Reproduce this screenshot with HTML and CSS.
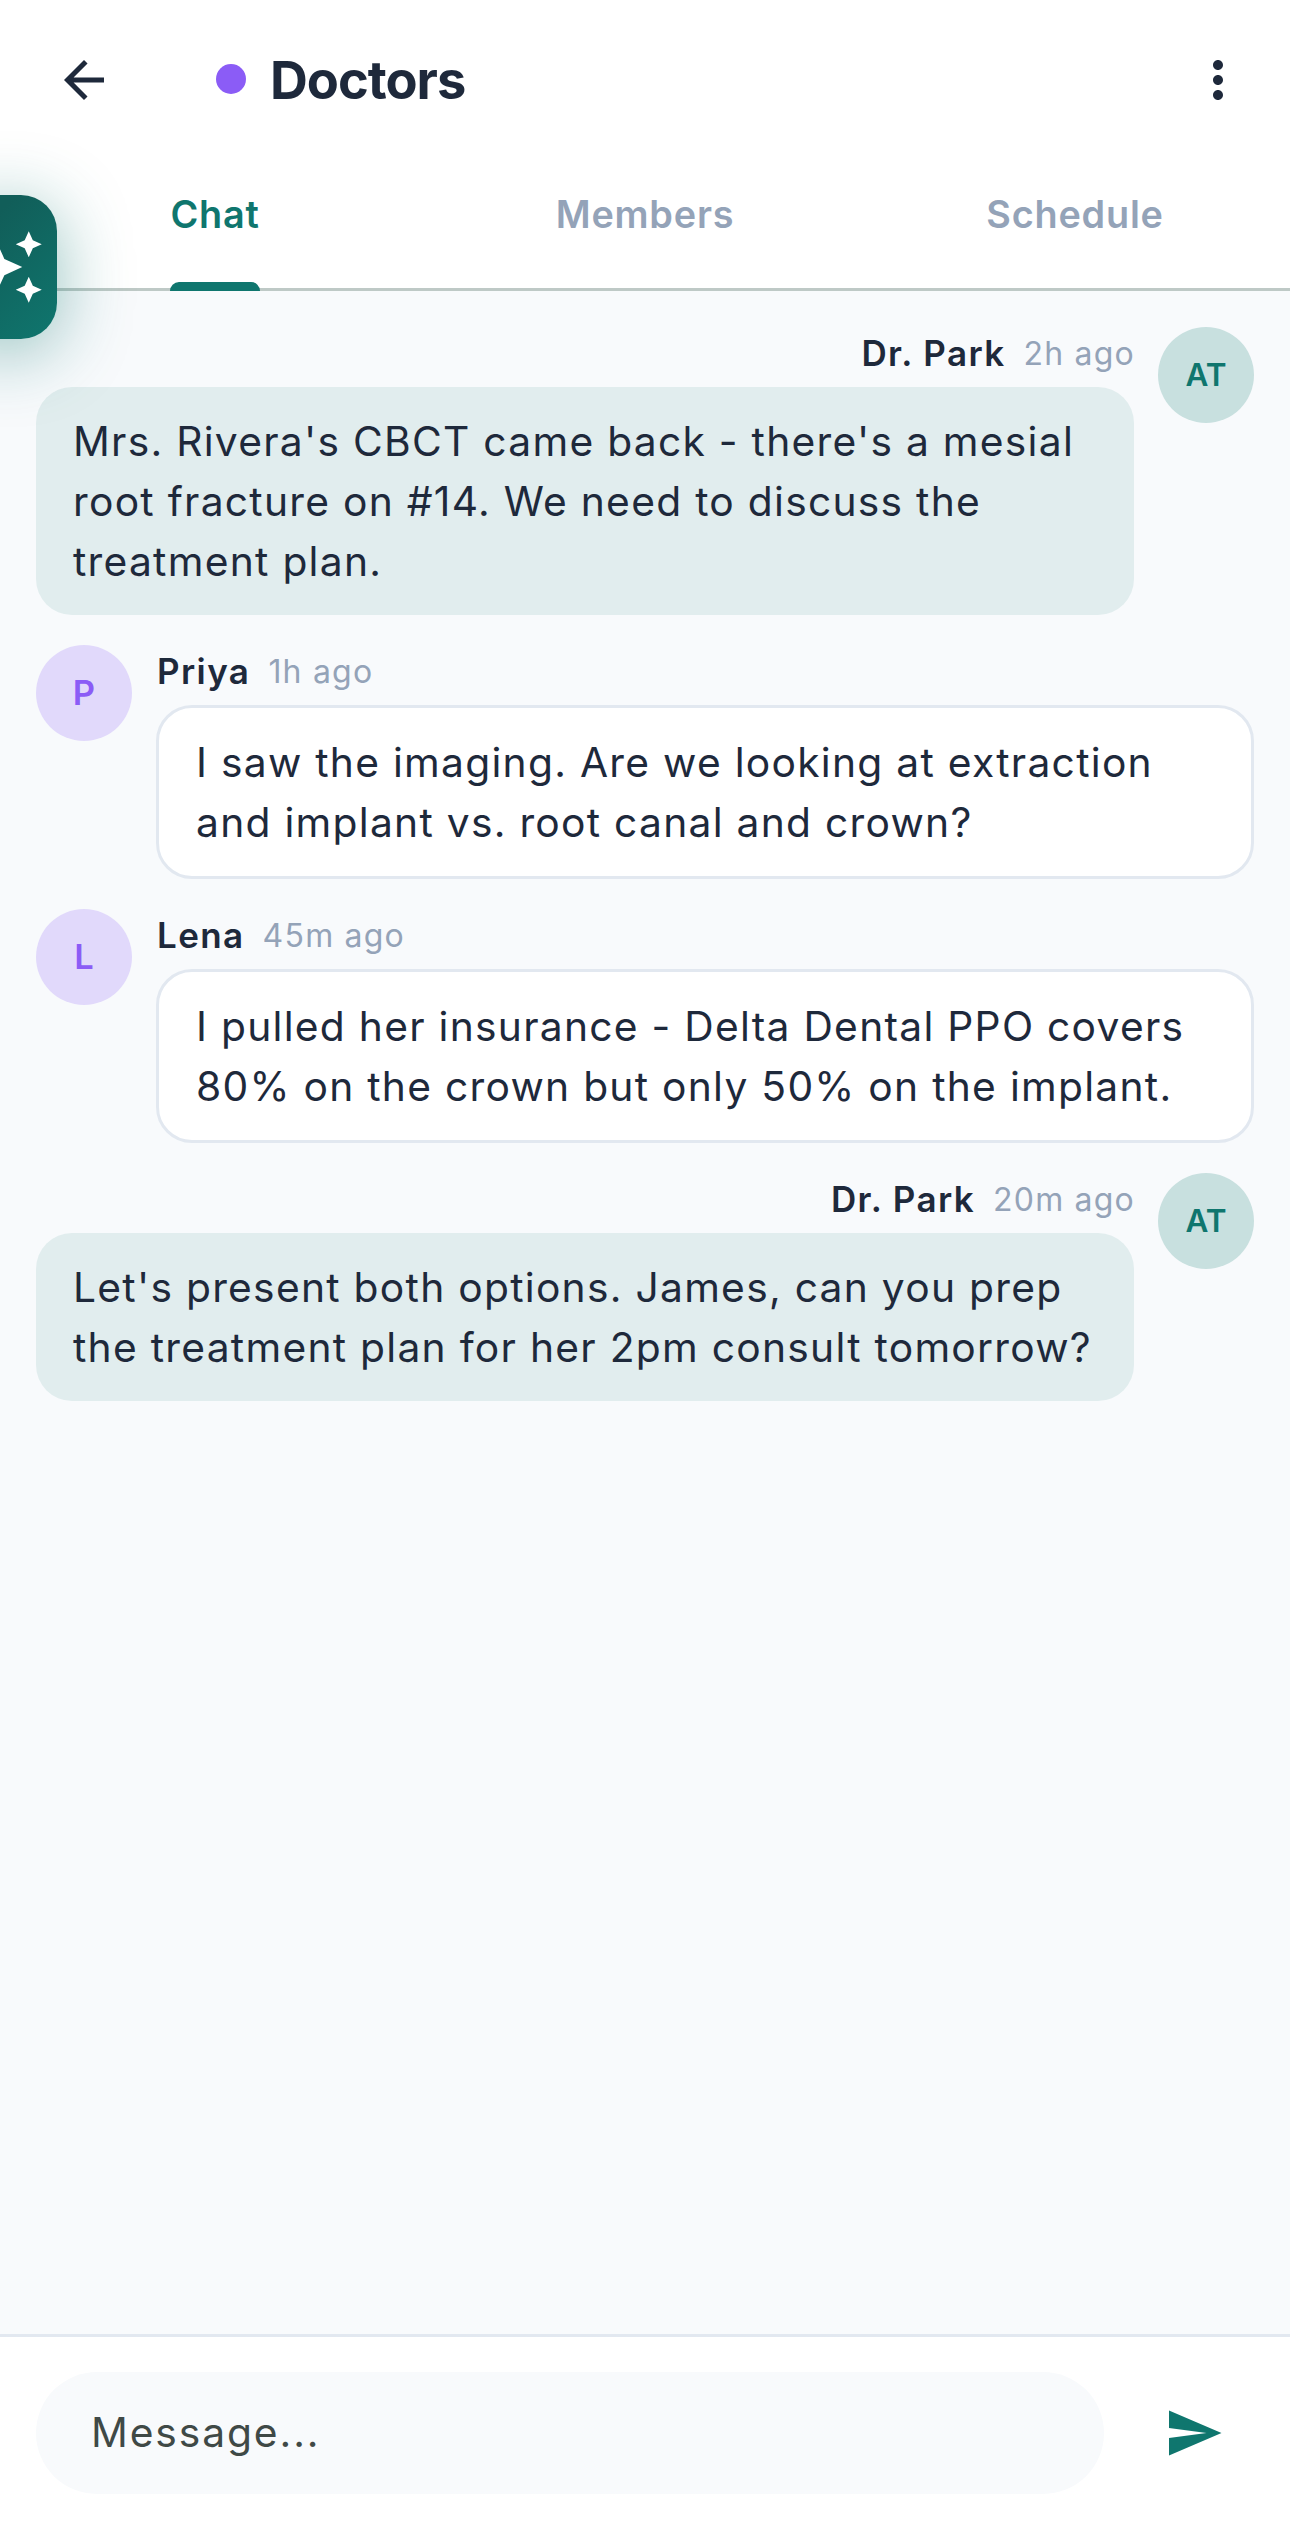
FILE: index.html
```html
<!DOCTYPE html>
<html lang="en">
<head>
    <meta charset="UTF-8">
    <meta name="viewport" content="width=device-width, initial-scale=1.0">
    <title>Doctors</title>
    <link rel="stylesheet" href="styles.css">
</head>
<body>
    <div class="app">
        <header class="top-bar">
            <svg class="icon" viewBox="0 0 24 24"><path d="M20 11H7.83l5.59-5.59L12 4l-8 8 8 8 1.41-1.41L7.83 13H20v-2z"/></svg>
            <span class="group-dot"></span>
            <h1 class="group-name">Doctors</h1>
            <svg class="icon" viewBox="0 0 24 24"><path d="M12 8c1.1 0 2-.9 2-2s-.9-2-2-2-2 .9-2 2 .9 2 2 2zm0 2c-1.1 0-2 .9-2 2s.9 2 2 2 2-.9 2-2-.9-2-2-2zm0 6c-1.1 0-2 .9-2 2s.9 2 2 2 2-.9 2-2-.9-2-2-2z"/></svg>
        </header>
        <nav class="tabs">
            <div class="tab active"><span>Chat</span></div>
            <div class="tab"><span>Members</span></div>
            <div class="tab"><span>Schedule</span></div>
        </nav>
        <main class="messages">
            <div class="message own">
                <div class="avatar">AT</div>
                <div class="content">
                    <div class="meta"><span class="name">Dr. Park</span><span class="time">2h ago</span></div>
                    <p class="bubble">Mrs. Rivera's CBCT came back - there's a mesial<br>root fracture on #14. We need to discuss the<br>treatment plan.</p>
                </div>
            </div>
            <div class="message">
                <div class="avatar">P</div>
                <div class="content">
                    <div class="meta"><span class="name">Priya</span><span class="time">1h ago</span></div>
                    <p class="bubble">I saw the imaging. Are we looking at extraction<br>and implant vs. root canal and crown?</p>
                </div>
            </div>
            <div class="message">
                <div class="avatar">L</div>
                <div class="content">
                    <div class="meta"><span class="name">Lena</span><span class="time">45m ago</span></div>
                    <p class="bubble">I pulled her insurance - Delta Dental PPO covers<br>80% on the crown but only 50% on the implant.</p>
                </div>
            </div>
            <div class="message own">
                <div class="avatar">AT</div>
                <div class="content">
                    <div class="meta"><span class="name">Dr. Park</span><span class="time">20m ago</span></div>
                    <p class="bubble">Let's present both options. James, can you prep<br>the treatment plan for her 2pm consult tomorrow?</p>
                </div>
            </div>
        </main>
        <footer class="composer">
            <div class="field">Message...</div>
            <svg class="icon send" viewBox="0 0 24 24"><path d="M2 21L23 12 2 3v7l15 2-15 2z"/></svg>
        </footer>
        <!-- assistant button, half tucked behind the left edge -->
        <div class="assistant">
            <svg viewBox="0 0 24 24"><path d="M19 9l1.25-2.75L23 5l-2.75-1.25L19 1l-1.25 2.75L15 5l2.75 1.25L19 9zm-7.5.5L9 4 6.5 9.5 1 12l5.5 2.5L9 20l2.5-5.5L17 12l-5.5-2.5zM19 15l-1.25 2.75L15 19l2.75 1.25L19 23l1.25-2.75L23 19l-2.75-1.25L19 15z"/></svg>
        </div>
    </div>
</body>
</html>
```
FILE: styles.css
```css
* {
    box-sizing: border-box;
}
body {
    margin: 0;
    font-family: Inter, sans-serif;
    color: #1e293b;
}
.app {
    position: relative;
    display: flex;
    flex-direction: column;
    width: 1290px;
    height: 2532px;
    overflow: hidden;
    background-color: #f8fafc;
}
.icon {
    flex: none;
    width: 60px;
    height: 60px;
    fill: #1e293b;
}
.top-bar {
    display: flex;
    align-items: center;
    height: 160px;
    padding: 0 42px 0 54px;
    background-color: #fff;
}
.group-dot {
    width: 30px;
    height: 30px;
    margin: 0 24px 2px 102px;
    border-radius: 50%;
    background-color: #8b5cf6;
}
.group-name {
    flex: 1;
    margin: 0;
    font-size: 52.4px;
    font-weight: 700;
    letter-spacing: -1px;
}
.tabs {
    display: flex;
    height: 131px;
    background-color: #fff;
    border-bottom: 3px solid #bec9c6;
}
.tab {
    display: flex;
    flex: 1;
    justify-content: center;
    height: 131px;
    font-size: 37.8px;
    font-weight: 600;
    line-height: 108px;
    letter-spacing: 0.8px;
    color: #94a3b8;
}
.tab.active {
    color: #0f766e;
}
.tab.active span::after {
    content: "";
    display: block;
    height: 9px;
    margin-top: 14px;
    border-radius: 9px 9px 0 0;
    background-color: #0f766e;
}
.messages {
    display: flex;
    flex: 1;
    flex-direction: column;
    gap: 30px;
    padding: 36px;
}
.message {
    display: flex;
    gap: 24px;
}
.message.own {
    flex-direction: row-reverse;
}
.avatar {
    flex: none;
    width: 96px;
    height: 96px;
    border-radius: 50%;
    background-color: #e1d9fb;
    color: #8b5cf6;
    font-size: 34.5px;
    font-weight: 600;
    line-height: 96px;
    text-align: center;
}
.own .avatar {
    background-color: #c8e0df;
    color: #0f766e;
    font-size: 31.5px;
}
.content {
    flex: 1;
    min-width: 0;
}
.meta {
    display: flex;
    align-items: center;
    gap: 18px;
    height: 60px;
    padding: 0 0 8px 1px;
}
.own .meta {
    justify-content: flex-end;
    padding-right: 0;
}
.name {
    font-size: 35px;
    font-weight: 600;
    letter-spacing: 1.4px;
}
.time {
    margin-right: -1px;
    font-size: 32px;
    letter-spacing: 1.2px;
    color: #94a3b8;
}
.bubble {
    margin: 0;
    padding: 25px 36px 23px 37px;
    border: 3px solid #e2e8f0;
    border-radius: 36px;
    background-color: #fff;
    font-size: 40.75px;
    line-height: 60px;
    letter-spacing: 1.27px;
    white-space: nowrap;
}
.own .bubble {
    border: none;
    background-color: #e1edee;
}
.composer {
    display: flex;
    align-items: center;
    height: 198px;
    padding: 0 36px 3px;
    border-top: 3px solid #e2e8f0;
    background-color: #fff;
}
.field {
    width: 1068px;
    height: 122px;
    padding-left: 55px;
    border-radius: 61px;
    background-color: #f8fafc;
    color: #3f4946;
    font-size: 40.75px;
    line-height: 122px;
    letter-spacing: 1.9px;
}
.send {
    margin-left: 60px;
    fill: #0f766e;
}
.assistant {
    position: absolute;
    top: 195px;
    left: -45px;
    display: flex;
    align-items: center;
    justify-content: center;
    width: 102px;
    height: 144px;
    border-radius: 36px;
    background: linear-gradient(135deg, #115e59 25%, #0f766e);
    box-shadow: 0 12px 72px rgba(15, 118, 110, 0.45);
}
.assistant svg {
    flex: none;
    width: 78px;
    height: 78px;
    fill: #fff;
}
```
